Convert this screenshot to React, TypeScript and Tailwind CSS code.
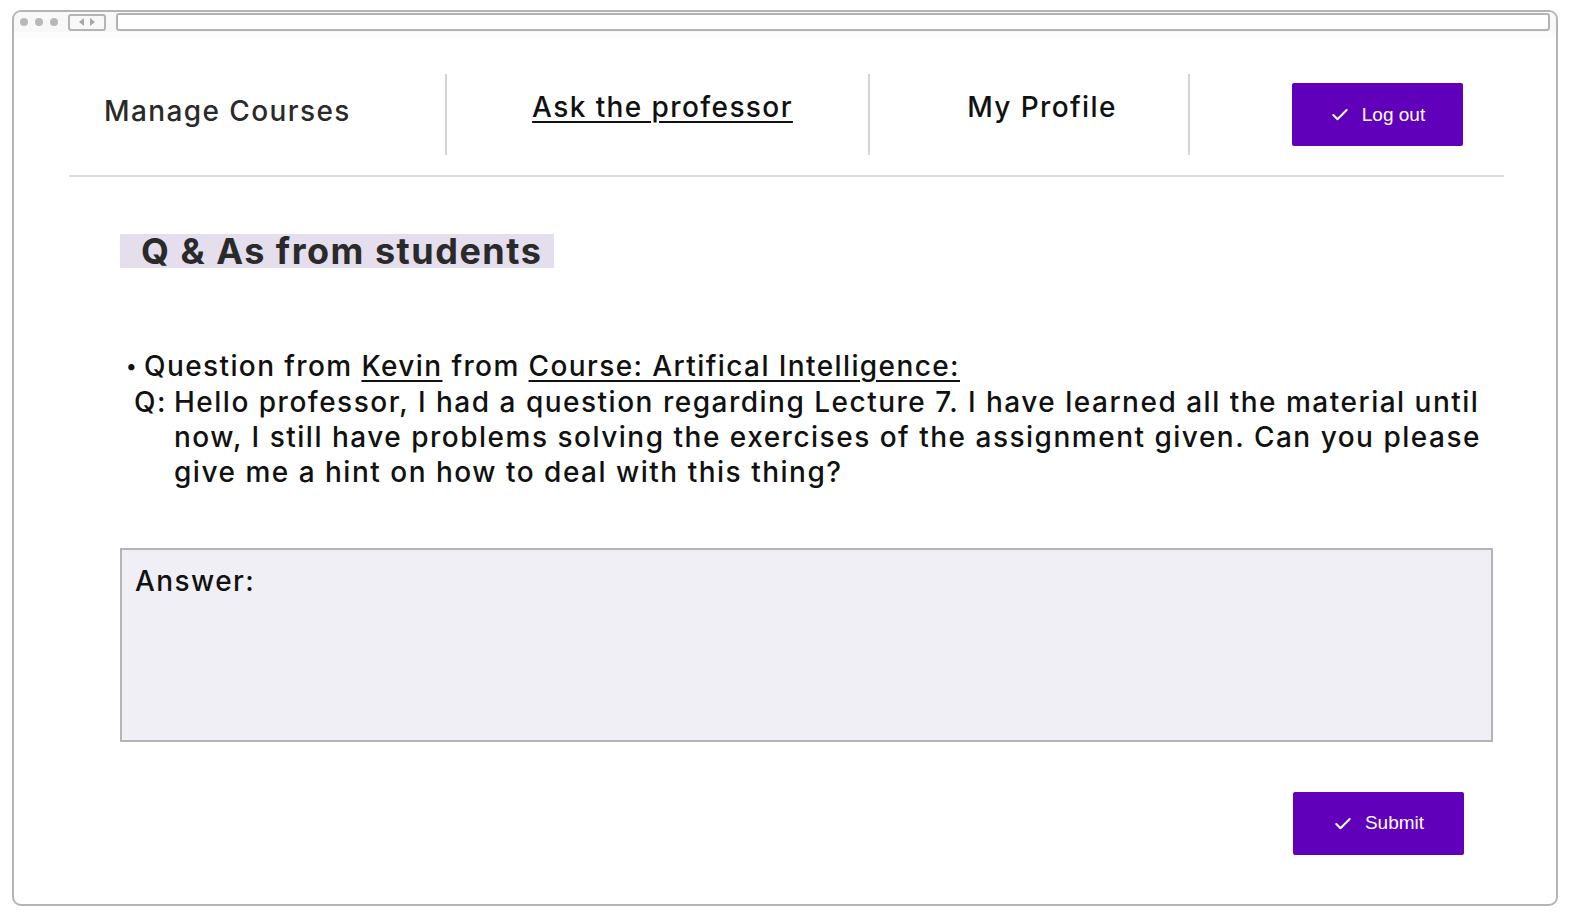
import { Check } from 'lucide-react';

const font = { fontFamily: 'Inter, "Open Sans", sans-serif' };

function PurpleButton({ label }: { label: string }) {
  return (
    <button className="w-[171px] h-[63px] bg-[#6100bb] rounded-[2px] flex items-center justify-center gap-3 text-white text-[19px] font-normal tracking-normal font-['Liberation_Sans',sans-serif]">
      <Check className="w-5 h-5" strokeWidth={2.5} />
      <span>{label}</span>
    </button>
  );
}

export default function App() {
  return (
    <div className="w-[1572px] h-[915px] bg-white pt-[10px] pl-[12px]" style={font}>
      <div className="w-[1546px] h-[896px] border-2 border-[#b4b4b4] rounded-[9px] overflow-hidden flex flex-col">
        {/* Browser chrome */}
        <div className="h-[20px] bg-[#f8f8f8] flex items-center pl-[6px] pr-[6px] gap-[10px]">
          <div className="flex gap-[7px]">
            <div className="w-[8px] h-[8px] rounded-full bg-[#b8b8b8]" />
            <div className="w-[8px] h-[8px] rounded-full bg-[#b8b8b8]" />
            <div className="w-[8px] h-[8px] rounded-full bg-[#b8b8b8]" />
          </div>
          <div className="w-[38px] h-[17px] border-2 border-[#b4b4b4] rounded-[3px] flex items-center justify-center gap-[6px]">
            <svg width="5" height="8" viewBox="0 0 5 8"><path d="M5 0 L0 4 L5 8Z" fill="#a8a8a8" /></svg>
            <svg width="5" height="8" viewBox="0 0 5 8"><path d="M0 0 L5 4 L0 8Z" fill="#a8a8a8" /></svg>
          </div>
          <div className="flex-1 h-[18px] border-2 border-[#b4b4b4] rounded-[3px] bg-white" />
        </div>
        <div className="h-[6px] bg-[#fcfcfc]" />

        {/* Nav */}
        <div className="ml-[55px] mr-[52px] mt-[36px] h-[103px] border-b-2 border-[#dcdcdc] flex items-start text-[#111] text-[28px] font-medium tracking-[1.4px] leading-[35px]">
          <div className="w-[376px] h-[81px] pl-[35px] pt-[20px] text-[#2a2a2a]">Manage Courses</div>
          <div className="w-[2px] h-[81px] bg-[#d4d4d4]" />
          <div className="w-[421px] h-[81px] flex justify-center pl-[10px] pt-[16px]">
            <span className="underline underline-offset-4">Ask the professor</span>
          </div>
          <div className="w-[2px] h-[81px] bg-[#d4d4d4]" />
          <div className="w-[318px] h-[81px] flex justify-center pl-[26px] pt-[16px]">My Profile</div>
          <div className="w-[2px] h-[81px] bg-[#d4d4d4]" />
          <div className="flex-1 pl-[102px] pt-[9px]">
            <PurpleButton label="Log out" />
          </div>
        </div>

        {/* Content */}
        <div className="pl-[106px] pr-[60px]">
          <div className="mt-[57px] w-[434px] h-[34px] bg-[#e4deed] flex items-center pl-[21px]">
            <h1 className="text-[36px] font-bold text-[#2a2a2a] leading-none tracking-[1.5px]">Q &amp; As from students</h1>
          </div>

          <div className="mt-[81px] text-[28px] font-medium leading-[35px] tracking-[1.4px] text-[#111]">
            <div className="flex items-center">
              <span className="w-[24px] pl-[6px] text-[20px]">•</span>
              <span>
                Question from <span className="underline underline-offset-4">Kevin</span> from{' '}
                <span className="underline underline-offset-4">Course: Artifical Intelligence:</span>
              </span>
            </div>
            <div className="flex pl-[14px] pt-[1px] tracking-[1.5px]">
              <span className="w-[40px]">Q:</span>
              <div>
                <div>Hello professor, I had a question regarding Lecture 7. I have learned all the material until</div>
                <div>now, I still have problems solving the exercises of the assignment given. Can you please</div>
                <div>give me a hint on how to deal with this thing?</div>
              </div>
            </div>
          </div>

          <div className="mt-[58px] w-[1373px] h-[194px] bg-[#f1eff6] border-2 border-[#b4b4b4] pl-[13px] pt-[14px]">
            <div className="text-[28px] font-medium leading-[35px] tracking-[1.4px] text-[#111]">Answer:</div>
          </div>

          <div className="mt-[50px] pl-[1173px]">
            <PurpleButton label="Submit" />
          </div>
        </div>
      </div>
    </div>
  );
}
